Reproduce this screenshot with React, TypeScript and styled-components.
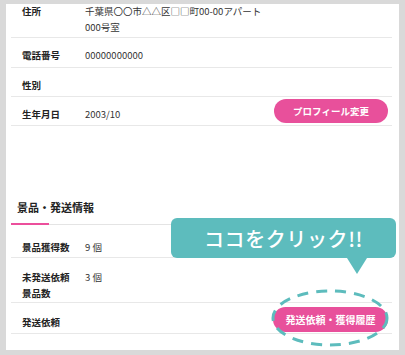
import React from 'react';
import styled, { createGlobalStyle } from 'styled-components';

const Global = createGlobalStyle`
  html, body { margin: 0; padding: 0; }
  body {
    background: #d9d9d9;
    font-family: "Noto Sans CJK JP", "Noto Sans", sans-serif;
  }
`;

const Frame = styled.div`
  width: 405px;
  height: 355px;
  box-sizing: border-box;
  padding: 4px 6px 5px 6px;
  background: #d9d9d9;
`;

const Panel = styled.div`
  position: relative;
  height: 100%;
  box-sizing: border-box;
  background: #fff;
  overflow: hidden;
  padding: 0 7px 0 5px;
`;

const Row = styled.div<{ $h: number; $pt?: number; $mt?: number }>`
  display: flex;
  align-items: center;
  box-sizing: border-box;
  height: ${(p) => p.$h}px;
  margin-top: ${(p) => p.$mt ?? 0}px;
  padding: ${(p) => p.$pt ?? 0}px 4px 0 11px;
  border-bottom: 1px solid #e8e8e8;
`;

const Field = styled.div`
  display: flex;
  align-items: flex-start;
  flex: 1;
  padding-top: 5px;
`;

const Label = styled.div`
  width: 63px;
  flex: none;
  font-size: 9.5px;
  line-height: 16px;
  font-weight: 700;
  color: #222;
`;

const Value = styled.div`
  font-size: 9.5px;
  line-height: 16px;
  color: #333;
`;

const PillButton = styled.button<{ $w: number; $h: number; $fs: number }>`
  flex: none;
  width: ${(p) => p.$w}px;
  height: ${(p) => p.$h}px;
  border: none;
  border-radius: ${(p) => p.$h / 2}px;
  background: #e8509b;
  color: #fff;
  font-family: "Noto Sans CJK JP", sans-serif;
  font-size: ${(p) => p.$fs}px;
  font-weight: 700;
  padding: 0;
  display: flex;
  align-items: center;
  justify-content: center;
`;

const Heading = styled.div`
  position: relative;
  margin-top: 73px;
  padding: 0 6px 9px;
  font-size: 11px;
  line-height: 16px;
  font-weight: 700;
  color: #222;
  border-bottom: 1px solid #e4e4e4;
  &::after {
    content: "";
    position: absolute;
    left: 0;
    bottom: -1px;
    width: 38px;
    height: 2px;
    background: #ec4f9c;
  }
`;

const Bubble = styled.div`
  position: absolute;
  left: 165px;
  top: 214px;
  width: 225px;
  height: 40px;
  border-radius: 6px;
  background: #5dbcbd;
  color: #fff;
  font-size: 20px;
  font-weight: 500;
  letter-spacing: 0.6px;
  display: flex;
  align-items: center;
  justify-content: center;
  &::after {
    content: "";
    position: absolute;
    left: 176px;
    top: 100%;
    border-top: 16px solid #5dbcbd;
    border-left: 10px solid transparent;
    border-right: 10px solid transparent;
  }
`;

const Ring = styled.svg`
  position: absolute;
  left: 264px;
  top: 284px;
  width: 120px;
  height: 62px;
  overflow: visible;
`;

export default function App() {
  return (
    <>
      <Global />
      <Frame>
        <Panel>
          <Row $h={42} $mt={-8}>
            <Field>
              <Label>住所</Label>
              <Value>
                千葉県〇〇市△△区□□町00-00アパート
                <br />
                000号室
              </Value>
            </Field>
          </Row>
          <Row $h={30}>
            <Field>
              <Label>電話番号</Label>
              <Value>00000000000</Value>
            </Field>
          </Row>
          <Row $h={29}>
            <Field>
              <Label>性別</Label>
              <Value />
            </Field>
          </Row>
          <Row $h={29}>
            <Field>
              <Label>生年月日</Label>
              <Value>2003/10</Value>
            </Field>
            <PillButton $w={114} $h={24} $fs={9.5}>
              プロフィール変更
            </PillButton>
          </Row>

          <Heading>景品・発送情報</Heading>

          <Row $h={33} $pt={7}>
            <Field>
              <Label>景品獲得数</Label>
              <Value>9 個</Value>
            </Field>
          </Row>
          <Row $h={45} $pt={4}>
            <Field>
              <Label>
                未発送依頼
                <br />
                景品数
              </Label>
              <Value>3 個</Value>
            </Field>
          </Row>
          <Row $h={31} $pt={2}>
            <Field>
              <Label>発送依頼</Label>
            </Field>
            <PillButton $w={115} $h={25} $fs={10}>
              発送依頼・獲得履歴
            </PillButton>
          </Row>

          <Bubble>ココをクリック!!</Bubble>
          <Ring viewBox="0 0 120 62">
            <ellipse
              cx="60"
              cy="30"
              rx="57"
              ry="27"
              fill="none"
              stroke="#5dbcbd"
              strokeWidth="3"
              strokeDasharray="11 8"
            />
          </Ring>
        </Panel>
      </Frame>
    </>
  );
}
